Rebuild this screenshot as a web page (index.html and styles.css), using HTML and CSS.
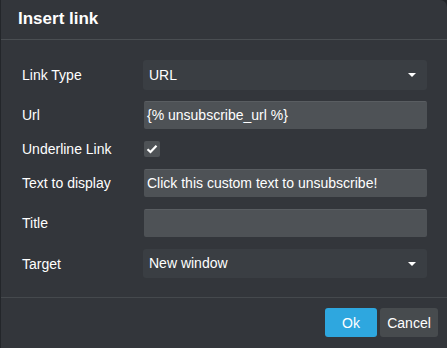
FILE: index.html
```html
<!DOCTYPE html>
<html lang="en">
<head>
	<meta charset="utf-8">
	<meta name="viewport" content="width=device-width, initial-scale=1.0">
	<link rel="stylesheet" href="styles.css">
</head>
<body>
	<div class="dialog">
		<div class="dialog-head">Insert link</div>
		<div class="dialog-body">
			<div class="row">
				<label class="label">Link Type</label>
				<div class="select">URL<span class="caret"></span></div>
			</div>
			<div class="row">
				<label class="label">Url</label>
				<div class="input">{% unsubscribe_url %}</div>
			</div>
			<div class="row row-check">
				<label class="label">Underline Link</label>
				<div class="check">
					<svg width="12" height="10" viewBox="0 0 12 10"><path d="M1.5 5.2 L4.5 8 L10.5 1.8" fill="none" stroke="#fff" stroke-width="2.2"/></svg>
				</div>
			</div>
			<div class="row">
				<label class="label">Text to display</label>
				<div class="input">Click this custom text to unsubscribe!</div>
			</div>
			<div class="row">
				<label class="label">Title</label>
				<div class="input"></div>
			</div>
			<div class="row">
				<label class="label">Target</label>
				<div class="select select-tall">New window<span class="caret"></span></div>
			</div>
		</div>
		<div class="dialog-foot">
			<button class="btn btn-ok">Ok</button>
			<button class="btn btn-cancel">Cancel</button>
		</div>
	</div>
</body>
</html>
```

FILE: styles.css
```css
body {
	margin: 0;
	background: #23262a;
	font-family: "Liberation Sans", Arial, sans-serif;
	font-size: 14px;
	color: #fff;
}
.dialog {
	margin-left: 1px;
	height: 348px;
	background: #33363b;
	border-top-right-radius: 7px;
	display: flex;
	flex-direction: column;
}
.dialog-head {
	height: 40px;
	box-sizing: border-box;
	padding: 7px 0 0 17px;
	font-size: 17px;
	font-weight: bold;
	line-height: 24px;
	border-bottom: 1px solid #4a4e52;
}
.dialog-body {
	padding: 20px 20px 0 21px;
	height: 258px;
	box-sizing: border-box;
	border-bottom: 1px solid #45494d;
}
.row {
	display: flex;
	align-items: center;
	margin-bottom: 12px;
}
.row:first-child {
	margin-bottom: 11px;
}
.label {
	width: 121px;
	flex: none;
}
.select {
	position: relative;
	width: 285px;
	height: 30px;
	line-height: 30px;
	padding-left: 6px;
	box-sizing: border-box;
	background: #3a3e43;
	border-radius: 3px;
}
.select-tall {
	height: 29px;
	line-height: 29px;
}
.caret {
	position: absolute;
	right: 11px;
	top: 13px;
	border-left: 4px solid transparent;
	border-right: 4px solid transparent;
	border-top: 4px solid #fff;
}
.input {
	width: 283px;
	height: 28px;
	line-height: 27px;
	margin-left: 1px;
	padding-left: 3px;
	box-sizing: border-box;
	background: #4e5256;
	border-radius: 2px;
	border-top: 1px solid #595d61;
}
.row-check {
	height: 16px;
}
.check {
	margin-left: 1px;
	width: 16px;
	height: 16px;
	background: #4e5256;
	border-radius: 2px;
	display: flex;
	align-items: center;
	justify-content: center;
}
.dialog-foot {
	display: flex;
	justify-content: flex-end;
	padding: 10px 9px 0 0;
	gap: 3px;
}
.btn {
	height: 29px;
	border: 0;
	border-radius: 3px;
	color: #fff;
	font-family: inherit;
	font-size: 14px;
	padding: 0;
}
.btn-ok {
	width: 52px;
	background: #2ea7df;
}
.btn-cancel {
	width: 58px;
	background: #474b4e;
}
```
